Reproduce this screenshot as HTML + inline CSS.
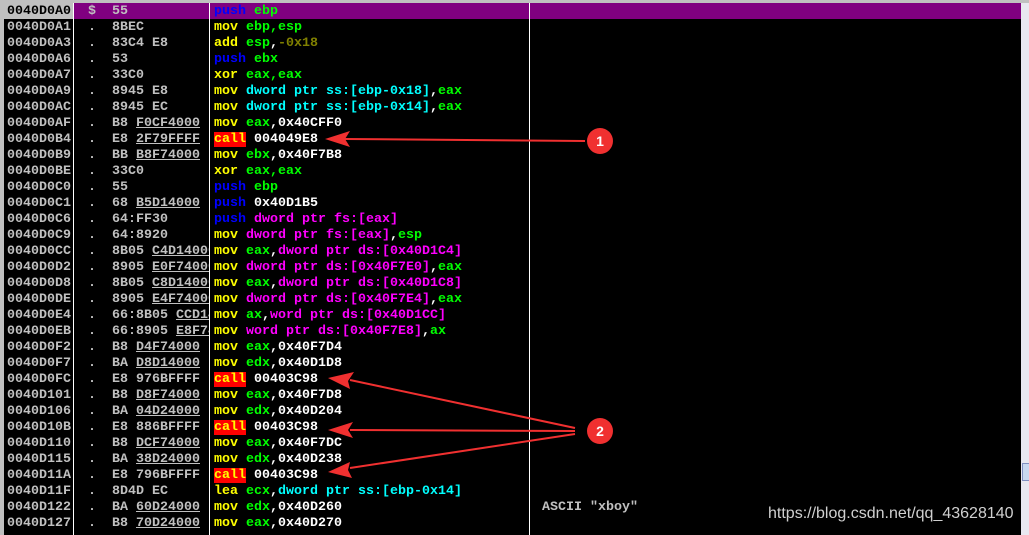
<!DOCTYPE html>
<html><head><style>
body{margin:0;width:1029px;height:535px;background:#000;overflow:hidden;position:relative;font-family:"Liberation Mono",monospace;font-weight:bold;font-size:13.33px}
.top{position:absolute;left:0;top:0;width:1029px;height:3px;background:#c0c0c0}
.r{position:absolute;left:0;height:16px;width:1021px;line-height:18px;white-space:pre}
.a{position:absolute;left:7px;color:#c0c0c0}
.h{position:absolute;left:88px;color:#c0c0c0;width:121px;overflow:hidden}
.d{position:absolute;left:214px;color:#fff}
.vl{position:absolute;top:3px;width:1px;height:532px;background:#fff}
.b{color:#0000ff}.y{color:#ffff00}.g{color:#00ff00}.c{color:#00ffff}.m{color:#ff00ff}.o{color:#808000}.w{color:#fff}
.call{background:#ff0000;color:#ffff00}
.u{text-decoration:underline}
.sb{position:absolute;left:1021px;top:3px;width:8px;height:532px;background:#e8e8f0}
</style></head><body>
<div class="top"></div>
<div style="position:absolute;left:0;top:3px;width:4px;height:532px;background:#c0c0c0"></div>
<div style="position:absolute;left:0;top:3px;width:73px;height:16px;background:#c0c0c0"></div>
<div style="position:absolute;left:74px;top:3px;width:947px;height:16px;background:#800080"></div>
<div class="vl" style="left:73px"></div>
<div class="vl" style="left:209px"></div>
<div class="vl" style="left:529px"></div>
<div class="sb"></div>
<div style="position:absolute;left:1022px;top:463px;width:7px;height:16px;background:#c8d8f0;border:1px solid #8090c0"></div>

<div class="r" style="top:3px"><span class="a" style="color:#000">0040D0A0</span><span class="h">$  55</span><span class="d"><span class="b">push</span> <span class="g">ebp</span></span></div>
<div class="r" style="top:19px"><span class="a">0040D0A1</span><span class="h">.  8BEC</span><span class="d"><span class="y">mov</span> <span class="g">ebp,esp</span></span></div>
<div class="r" style="top:35px"><span class="a">0040D0A3</span><span class="h">.  83C4 E8</span><span class="d"><span class="y">add</span> <span class="g">esp</span>,<span class="o">-0x18</span></span></div>
<div class="r" style="top:51px"><span class="a">0040D0A6</span><span class="h">.  53</span><span class="d"><span class="b">push</span> <span class="g">ebx</span></span></div>
<div class="r" style="top:67px"><span class="a">0040D0A7</span><span class="h">.  33C0</span><span class="d"><span class="y">xor</span> <span class="g">eax,eax</span></span></div>
<div class="r" style="top:83px"><span class="a">0040D0A9</span><span class="h">.  8945 E8</span><span class="d"><span class="y">mov</span> <span class="c">dword ptr ss:[ebp-0x18]</span>,<span class="g">eax</span></span></div>
<div class="r" style="top:99px"><span class="a">0040D0AC</span><span class="h">.  8945 EC</span><span class="d"><span class="y">mov</span> <span class="c">dword ptr ss:[ebp-0x14]</span>,<span class="g">eax</span></span></div>
<div class="r" style="top:115px"><span class="a">0040D0AF</span><span class="h">.  B8 <span class="u">F0CF4000</span></span><span class="d"><span class="y">mov</span> <span class="g">eax</span>,0x40CFF0</span></div>
<div class="r" style="top:131px"><span class="a">0040D0B4</span><span class="h">.  E8 <span class="u">2F79FFFF</span></span><span class="d"><span class="call">call</span> 004049E8</span></div>
<div class="r" style="top:147px"><span class="a">0040D0B9</span><span class="h">.  BB <span class="u">B8F74000</span></span><span class="d"><span class="y">mov</span> <span class="g">ebx</span>,0x40F7B8</span></div>
<div class="r" style="top:163px"><span class="a">0040D0BE</span><span class="h">.  33C0</span><span class="d"><span class="y">xor</span> <span class="g">eax,eax</span></span></div>
<div class="r" style="top:179px"><span class="a">0040D0C0</span><span class="h">.  55</span><span class="d"><span class="b">push</span> <span class="g">ebp</span></span></div>
<div class="r" style="top:195px"><span class="a">0040D0C1</span><span class="h">.  68 <span class="u">B5D14000</span></span><span class="d"><span class="b">push</span> 0x40D1B5</span></div>
<div class="r" style="top:211px"><span class="a">0040D0C6</span><span class="h">.  64:FF30</span><span class="d"><span class="b">push</span> <span class="m">dword ptr fs:[eax]</span></span></div>
<div class="r" style="top:227px"><span class="a">0040D0C9</span><span class="h">.  64:8920</span><span class="d"><span class="y">mov</span> <span class="m">dword ptr fs:[eax]</span>,<span class="g">esp</span></span></div>
<div class="r" style="top:243px"><span class="a">0040D0CC</span><span class="h">.  8B05 <span class="u">C4D14000</span></span><span class="d"><span class="y">mov</span> <span class="g">eax</span>,<span class="m">dword ptr ds:[0x40D1C4]</span></span></div>
<div class="r" style="top:259px"><span class="a">0040D0D2</span><span class="h">.  8905 <span class="u">E0F74000</span></span><span class="d"><span class="y">mov</span> <span class="m">dword ptr ds:[0x40F7E0]</span>,<span class="g">eax</span></span></div>
<div class="r" style="top:275px"><span class="a">0040D0D8</span><span class="h">.  8B05 <span class="u">C8D14000</span></span><span class="d"><span class="y">mov</span> <span class="g">eax</span>,<span class="m">dword ptr ds:[0x40D1C8]</span></span></div>
<div class="r" style="top:291px"><span class="a">0040D0DE</span><span class="h">.  8905 <span class="u">E4F74000</span></span><span class="d"><span class="y">mov</span> <span class="m">dword ptr ds:[0x40F7E4]</span>,<span class="g">eax</span></span></div>
<div class="r" style="top:307px"><span class="a">0040D0E4</span><span class="h">.  66:8B05 <span class="u">CCD14000</span></span><span class="d"><span class="y">mov</span> <span class="g">ax</span>,<span class="m">word ptr ds:[0x40D1CC]</span></span></div>
<div class="r" style="top:323px"><span class="a">0040D0EB</span><span class="h">.  66:8905 <span class="u">E8F74000</span></span><span class="d"><span class="y">mov</span> <span class="m">word ptr ds:[0x40F7E8]</span>,<span class="g">ax</span></span></div>
<div class="r" style="top:339px"><span class="a">0040D0F2</span><span class="h">.  B8 <span class="u">D4F74000</span></span><span class="d"><span class="y">mov</span> <span class="g">eax</span>,0x40F7D4</span></div>
<div class="r" style="top:355px"><span class="a">0040D0F7</span><span class="h">.  BA <span class="u">D8D14000</span></span><span class="d"><span class="y">mov</span> <span class="g">edx</span>,0x40D1D8</span></div>
<div class="r" style="top:371px"><span class="a">0040D0FC</span><span class="h">.  E8 976BFFFF</span><span class="d"><span class="call">call</span> 00403C98</span></div>
<div class="r" style="top:387px"><span class="a">0040D101</span><span class="h">.  B8 <span class="u">D8F74000</span></span><span class="d"><span class="y">mov</span> <span class="g">eax</span>,0x40F7D8</span></div>
<div class="r" style="top:403px"><span class="a">0040D106</span><span class="h">.  BA <span class="u">04D24000</span></span><span class="d"><span class="y">mov</span> <span class="g">edx</span>,0x40D204</span></div>
<div class="r" style="top:419px"><span class="a">0040D10B</span><span class="h">.  E8 886BFFFF</span><span class="d"><span class="call">call</span> 00403C98</span></div>
<div class="r" style="top:435px"><span class="a">0040D110</span><span class="h">.  B8 <span class="u">DCF74000</span></span><span class="d"><span class="y">mov</span> <span class="g">eax</span>,0x40F7DC</span></div>
<div class="r" style="top:451px"><span class="a">0040D115</span><span class="h">.  BA <span class="u">38D24000</span></span><span class="d"><span class="y">mov</span> <span class="g">edx</span>,0x40D238</span></div>
<div class="r" style="top:467px"><span class="a">0040D11A</span><span class="h">.  E8 796BFFFF</span><span class="d"><span class="call">call</span> 00403C98</span></div>
<div class="r" style="top:483px"><span class="a">0040D11F</span><span class="h">.  8D4D EC</span><span class="d"><span class="y">lea</span> <span class="g">ecx</span>,<span class="c">dword ptr ss:[ebp-0x14]</span></span></div>
<div class="r" style="top:499px"><span class="a">0040D122</span><span class="h">.  BA <span class="u">60D24000</span></span><span class="d"><span class="y">mov</span> <span class="g">edx</span>,0x40D260</span><span style="position:absolute;left:542px;color:#c0c0c0">ASCII "xboy"</span></div>
<div class="r" style="top:515px"><span class="a">0040D127</span><span class="h">.  B8 <span class="u">70D24000</span></span><span class="d"><span class="y">mov</span> <span class="g">eax</span>,0x40D270</span></div>
<div style="position:absolute;left:768px;top:505px;color:#d0d0d0;font-family:'Liberation Sans',sans-serif;font-weight:normal;font-size:16px">https://blog.csdn.net/qq_43628140</div>

<svg style="position:absolute;left:0;top:0" width="1029" height="535">
<g fill="#f03030" stroke="#f03030">
<line x1="585" y1="141" x2="345" y2="139" stroke-width="2"/>
<polygon points="325,139 350,131 345,139 350,147" stroke="none"/>
<line x1="575" y1="428" x2="350" y2="380" stroke-width="2"/>
<polygon points="328,378 354,372 348,381 350,389" stroke="none"/>
<line x1="575" y1="431" x2="350" y2="430" stroke-width="2"/>
<polygon points="328,430 353,422 348,430 353,438" stroke="none"/>
<line x1="575" y1="434" x2="350" y2="468" stroke-width="2"/>
<polygon points="328,472 350,462 348,470 352,478" stroke="none"/>
<circle cx="600" cy="141" r="13" stroke="none"/>
<circle cx="600" cy="431" r="13" stroke="none"/>
</g>
<text x="600" y="146" fill="#fff" font-family="Liberation Sans" font-size="14" text-anchor="middle">1</text>
<text x="600" y="436" fill="#fff" font-family="Liberation Sans" font-size="14" text-anchor="middle">2</text>
</svg>
</body></html>
